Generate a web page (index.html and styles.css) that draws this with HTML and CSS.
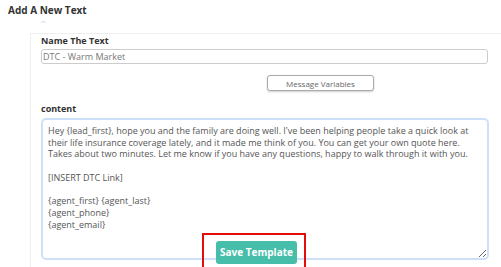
FILE: index.html
```html
<!DOCTYPE html>
<html lang="en">
<head>
<meta charset="UTF-8">
<meta name="viewport" content="width=device-width, initial-scale=1.0">
<title>Add A New Text</title>
<link rel="stylesheet" href="styles.css">
</head>
<body>
  <div class="page">
    <h1 class="page-title">Add A New Text</h1>
    <div class="loader-mark"></div>
    <div class="panel">
      <div class="field-label">Name The Text</div>
      <input class="name-input" type="text" value="DTC - Warm Market">
      <button class="vars-btn">Message Variables</button>
      <div class="field-label content-label">content</div>
      <textarea class="content-textarea">Hey {lead_first}, hope you and the family are doing well. I've been helping people take a quick look at their life insurance coverage lately, and it made me think of you. You can get your own quote here. Takes about two minutes. Let me know if you have any questions, happy to walk through it with you.

[INSERT DTC Link]

{agent_first} {agent_last}
{agent_phone}
{agent_email}</textarea>
      <div class="save-row">
        <div class="highlight-box">
          <button class="save-btn">Save Template</button>
        </div>
      </div>
    </div>
  </div>
</body>
</html>
```

FILE: styles.css
```css
html, body {
  margin: 0;
  padding: 0;
  background: #fff;
  font-family: 'Open Sans', sans-serif;
  color: #333;
  overflow: hidden;
}
.page {
  padding: 3px 0 0 8px;
}
.page-title {
  font-size: 10px;
  font-weight: 700;
  color: #333;
  margin: 0;
  line-height: 14px;
}
.loader-mark {
  width: 5px;
  height: 4px;
  margin: 4px 0 0 33px;
  border-top: 1px solid #c9d9ef;
  border-radius: 3px 3px 0 0;
}
.panel {
  width: 471px;
  height: 235px;
  margin: 7px 0 0 22px;
  padding: 0 0 0 10px;
  border: 1px solid #eee;
  border-right: none;
  box-sizing: border-box;
}
.field-label {
  font-size: 9px;
  font-weight: 700;
  color: #333;
  line-height: 13px;
}
.name-input {
  display: block;
  width: 447px;
  height: 15px;
  margin-top: 2px;
  padding: 0 1px;
  box-sizing: border-box;
  border: 1px solid #ccc;
  border-radius: 3px;
  font-family: 'Open Sans', sans-serif;
  font-size: 9px;
  color: #777;
  outline: none;
}
.vars-btn {
  display: block;
  width: 107px;
  height: 16px;
  margin: 11px 0 0 226px;
  padding: 0;
  background: #fff;
  border: 1px solid #aaa;
  border-radius: 3px;
  box-shadow: 0 1px 2px rgba(0, 0, 0, 0.2);
  font-family: 'Open Sans', sans-serif;
  font-size: 8px;
  color: #666;
}
.content-label {
  margin-top: 11px;
}
.content-textarea {
  display: block;
  width: 448px;
  height: 142px;
  margin-top: 3px;
  padding: 5px 5px;
  box-sizing: border-box;
  border: 2px solid #cde0f8;
  border-radius: 5px;
  resize: vertical;
  font-family: 'Open Sans', sans-serif;
  font-size: 9px;
  line-height: 11.7px;
  color: #555;
  outline: none;
}
.save-row {
  display: flex;
  margin: -27px 0 0 161px;
}
.highlight-box {
  padding: 4px 7px 6px 12px;
  border: 2px solid #e30d0d;
}
.save-btn {
  width: 81px;
  height: 23px;
  padding: 0;
  background: #47bea9;
  border: none;
  border-radius: 3px;
  font-family: 'Open Sans', sans-serif;
  font-size: 10px;
  font-weight: 700;
  color: #fff;
}
```
